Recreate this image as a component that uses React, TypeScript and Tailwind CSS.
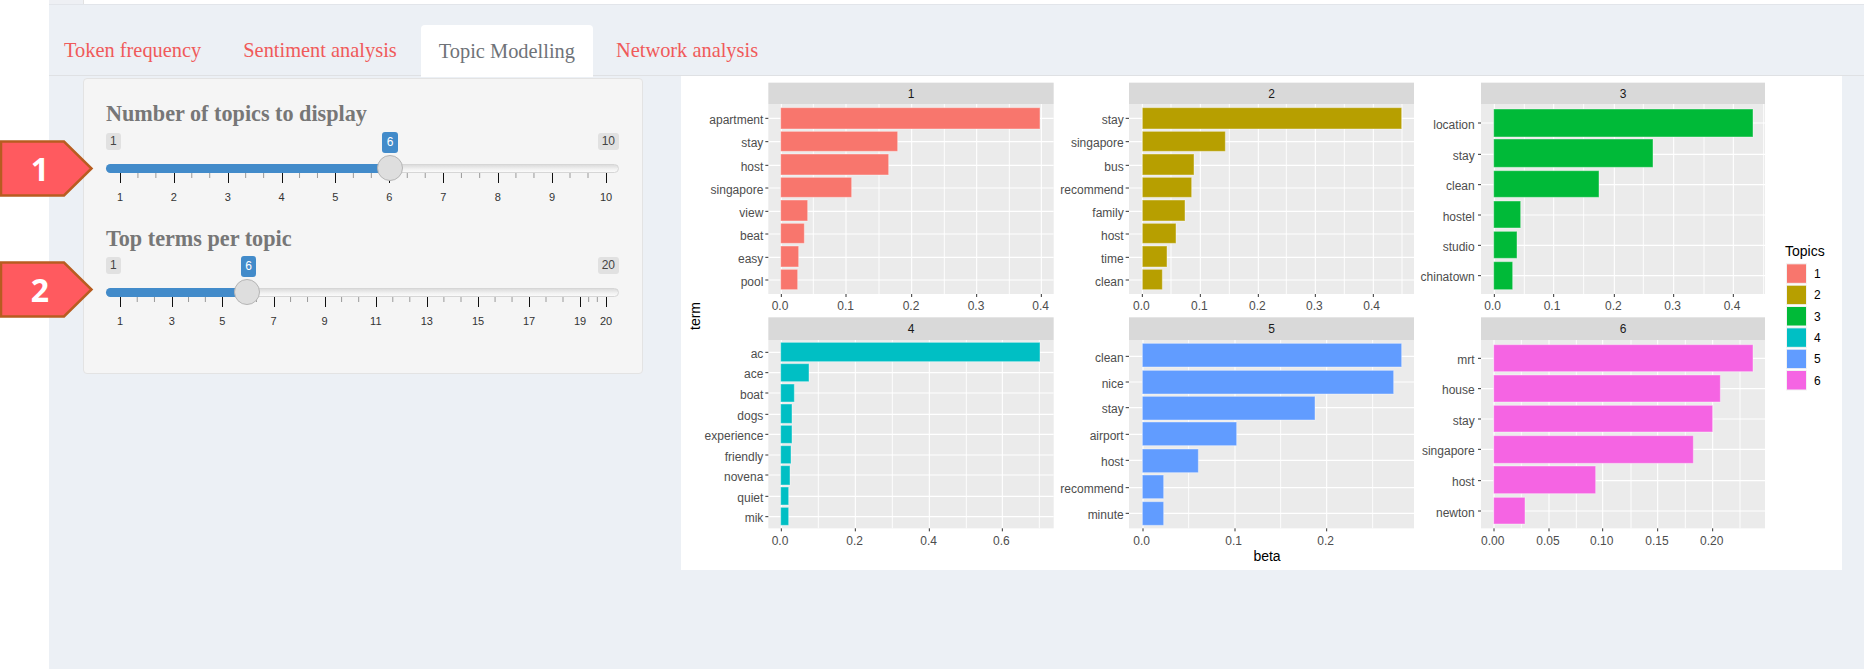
const SERIF = "font-['Liberation_Serif',serif]";

type Bar = [number, number, number, string];
type PanelSpec = {
  id: string; color: string; ox: number; oy: number; strip: [number, number]; stripY: [number, number];
  bottom: number; x0: number; termRight: number; tick: [number, number]; labelY: number;
  bars: Bar[]; grid: number[]; major: number[]; minor: number[]; xl: [string, number][];
};

const row1Y: [number, number][] = [[113,177],[184,244],[252,315],[322,382],[390,453],[460,520],[528,591],[598,659]];
const row1Grid = [145,215,286,354,424,492,562,630];

const mk = (ys: [number, number][], ends: number[], terms: string[]): Bar[] =>
  ys.map((y, i) => [y[0], y[1], ends[i], terms[i]]);

const panels: PanelSpec[] = [
  { id: "1", color: "#F8766D", ox: 680, oy: 70, strip: [265,1121], stripY: [38,102], bottom: 672, x0: 302, termRight: 250, tick: [256,265], labelY: 708,
    bars: mk(row1Y, [1080,653,626,515,383,373,356,353], ["apartment","stay","host","singapore","view","beat","easy","pool"]),
    grid: row1Grid, major: [304,498,695,890,1084], minor: [400,597,793,988],
    xl: [["0.0",300],["0.1",497],["0.2",693],["0.3",888],["0.4",1082]] },
  { id: "2", color: "#B79F00", ox: 1080, oy: 70, strip: [147,1002], stripY: [38,102], bottom: 672, x0: 187, termRight: 131, tick: [137,147], labelY: 708,
    bars: mk(row1Y, [965,436,342,335,315,288,261,247], ["stay","singapore","bus","recommend","family","host","time","clean"]),
    grid: row1Grid, major: [187,361,535,706,880], minor: [273,448,619,793,966],
    xl: [["0.0",184],["0.1",358],["0.2",532],["0.3",703],["0.4",875]] },
  { id: "3", color: "#00BA38", ox: 1460, oy: 70, strip: [63,915], stripY: [38,102], bottom: 672, x0: 101, termRight: 44, tick: [54,63], labelY: 708,
    bars: mk([[117,201],[207,292],[302,382],[393,474],[484,565],[575,659]], [879,579,417,182,171,158], ["location","stay","clean","hostel","studio","chinatown"]),
    grid: [159,253,344,435,526,617], major: [103,281,463,641,820], minor: [193,371,550,732,911],
    xl: [["0.0",98],["0.1",276],["0.2",460],["0.3",638],["0.4",816]] },
  { id: "4", color: "#00BFC4", ox: 680, oy: 310, strip: [265,1121], stripY: [22,90], bottom: 655, x0: 302, termRight: 250, tick: [256,265], labelY: 692,
    bars: mk([[97,155],[161,215],[222,276],[282,340],[346,400],[407,461],[467,525],[531,585],[592,646]], [1080,387,343,336,336,333,330,326,326], ["ac","ace","boat","dogs","experience","friendly","novena","quiet","mik"]),
    grid: [127,188,249,313,373,435,495,559,620], major: [304,526,748,967], minor: [415,637,859,1078],
    xl: [["0.0",300],["0.2",524],["0.4",746],["0.6",964]] },
  { id: "5", color: "#619CFF", ox: 1080, oy: 310, strip: [147,1002], stripY: [22,90], bottom: 655, x0: 187, termRight: 131, tick: [137,147], labelY: 692,
    bars: mk([[100,171],[181,252],[259,330],[336,407],[417,488],[495,566],[575,646]], [965,941,705,470,355,251,251], ["clean","nice","stay","airport","host","recommend","minute"]),
    grid: [139,216,293,373,451,533,610], major: [189,465,740], minor: [326,602,878],
    xl: [["0.0",185],["0.1",461],["0.2",737]] },
  { id: "6", color: "#F564E3", ox: 1460, oy: 310, strip: [63,915], stripY: [22,90], bottom: 655, x0: 101, termRight: 44, tick: [54,63], labelY: 692,
    bars: mk([[104,185],[195,276],[286,366],[377,460],[468,551],[562,642]], [879,781,758,700,407,195], ["mrt","house","stay","singapore","host","newton"]),
    grid: [145,236,327,418,512,603], major: [102,267,428,593,758], minor: [184,349,513,676,840],
    xl: [["0.00",98],["0.05",264],["0.10",425],["0.15",591],["0.20",755]] },
];

function Panel({ p }: { p: PanelSpec }) {
  const X = (v: number) => p.ox + v / 3;
  const Y = (v: number) => p.oy + v / 3;
  const L = X(p.strip[0]), R = X(p.strip[1]);
  const T = Y(p.stripY[0]), M = Y(p.stripY[1]), B = Y(p.bottom);
  return (
    <g>
      <rect x={L} y={T} width={R - L} height={M - T} fill="#D9D9D9" />
      <text x={(L + R) / 2} y={(T + M) / 2 + 4.4} textAnchor="middle" className="text-[12px] fill-[#1a1a1a]">{p.id}</text>
      <rect x={L} y={M} width={R - L} height={B - M} fill="#EBEBEB" />
      {p.minor.map((v) => <line key={"n" + v} x1={X(v)} x2={X(v)} y1={M} y2={B} stroke="#fff" strokeWidth={0.9} />)}
      {p.major.map((v) => <line key={"m" + v} x1={X(v)} x2={X(v)} y1={M} y2={B} stroke="#fff" strokeWidth={1.1} />)}
      {p.grid.map((v) => <line key={"h" + v} x1={L} x2={R} y1={Y(v)} y2={Y(v)} stroke="#fff" strokeWidth={1.1} />)}
      {p.bars.map((b) => (
        <rect key={b[3]} x={X(p.x0)} y={Y(b[0])} width={(b[2] - p.x0) / 3} height={(b[1] - b[0]) / 3} fill={p.color} stroke="#fff" strokeOpacity={0.4} strokeWidth={1} />
      ))}
      {p.bars.map((b, i) => (
        <g key={"t" + b[3]}>
          <line x1={X(p.tick[0])} x2={X(p.tick[1])} y1={Y(p.grid[i])} y2={Y(p.grid[i])} stroke="#333" strokeWidth={1} />
          <text x={X(p.termRight)} y={Y(p.grid[i]) + 5.6} textAnchor="end" className="text-[12px] fill-[#4d4d4d]">{b[3]}</text>
        </g>
      ))}
      {p.major.map((v) => <line key={"k" + v} x1={X(v)} x2={X(v)} y1={B} y2={B + 3} stroke="#333" strokeWidth={1} />)}
      {p.xl.map(([t, v]) => (
        <text key={t} x={X(v)} y={Y(p.labelY) + 4.4} textAnchor="middle" className="text-[12px] fill-[#4d4d4d]">{t}</text>
      ))}
    </g>
  );
}

const legendY = [580,644,708,772,836,900];

function Chart() {
  return (
    <svg viewBox="681 76 1161 494" width={1161} height={494} className="block font-['Liberation_Sans',sans-serif]">
      {panels.map((p) => <Panel key={p.id} p={p} />)}
      <text x={695} y={316} textAnchor="middle" transform="rotate(-90 695 316) translate(0 4.5)" className="text-[14px] fill-black">term</text>
      <text x={1267} y={561} textAnchor="middle" className="text-[14px] fill-black">beta</text>
      <text x={1785} y={255.5} className="text-[14px] fill-black">Topics</text>
      {panels.map((p, i) => (
        <g key={p.id}>
          <rect x={1786.5} y={70 + legendY[i] / 3 + 0.5} width={20} height={19.5} fill={p.color} stroke="#f2f2f2" strokeWidth={1} />
          <text x={1814} y={70 + legendY[i] / 3 + 14.5} className="text-[12px] fill-black">{p.id}</text>
        </g>
      ))}
    </svg>
  );
}

type SliderSpec = {
  max: string; valueX: number; valueW: number; fillTo: number;
  majors: [string, number][]; minors: number[];
};

function between(xs: number[]) {
  const out: number[] = [];
  for (let i = 0; i + 1 < xs.length; i++) {
    const a = xs[i], b = xs[i + 1];
    out.push(a + (b - a) / 3, a + (2 * (b - a)) / 3);
  }
  return out;
}

const m1: [string, number][] = [["1",120],["2",173.8],["3",227.7],["4",281.6],["5",335.4],["6",389.3],["7",443.2],["8",497.9],["9",552],["10",606]];
const m2: [string, number][] = [["1",120],["3",171.7],["5",222.2],["7",273.6],["9",324.5],["11",375.8],["13",426.8],["15",478.1],["17",529],["19",580],["20",606]];

const sliders: SliderSpec[] = [
  { max: "10", valueX: 382, valueW: 16, fillTo: 390, majors: m1, minors: between(m1.map((m) => m[1])) },
  { max: "20", valueX: 241, valueW: 15, fillTo: 247, majors: m2, minors: between(m2.map((m) => m[1])) },
];

function Slider({ s }: { s: SliderSpec }) {
  const OX = 106;
  return (
    <div className="relative w-[513px] font-['Liberation_Sans',sans-serif]">
      <div className="flex h-[31px] items-start justify-between text-[12px] leading-[17px] text-[#444]">
        <span className="rounded-[3px] bg-[#e1e1e1] px-[4px]">1</span>
        <span className="rounded-[3px] bg-[#e1e1e1] px-[4px]">{s.max}</span>
      </div>
      <span
        className="absolute top-[-1px] rounded-[3px] bg-[#428bca] text-center text-[12px] leading-[21px] text-white"
        style={{ left: s.valueX - OX, width: s.valueW }}
      >
        6
      </span>
      <div className="h-[9px] rounded-[5px] border border-[#d6d6d6] bg-[linear-gradient(#dcdcdc,#f2f2f2_60%,#fafafa)]">
        <div className="-m-px h-[9px] rounded-l-[5px] bg-[#428bca]" style={{ width: s.fillTo - OX }} />
      </div>
      <span
        className="absolute top-[22px] h-[26px] w-[26px] rounded-full border border-[#b5b5b5] bg-[#dedede]"
        style={{ left: s.fillTo - OX - 13 }}
      />
      <svg width={513} height={32} className="block text-[11px]">
        {s.minors.map((x) => <line key={x} x1={x - OX} x2={x - OX} y1={0} y2={5} stroke="#999" strokeWidth={1} />)}
        {s.majors.map(([t, x]) => (
          <g key={t}>
            <line x1={Math.round(x - OX) + 0.5} x2={Math.round(x - OX) + 0.5} y1={0} y2={10} stroke="#111" strokeWidth={1} />
            <text x={x - OX} y={27.5} textAnchor="middle" className="fill-[#333]">{t}</text>
          </g>
        ))}
      </svg>
    </div>
  );
}

function Marker({ n, top }: { n: string; top: string }) {
  return (
    <div className={`absolute left-0 h-[57px] w-[94px] ${top}`}>
      <svg width={94} height={57} className="absolute inset-0">
        <path d="M1 1.5 H64 L91.5 28.5 L64 55.5 H1 Z" fill="#ff5a5f" stroke="#b85c20" strokeWidth={2.5} />
      </svg>
      <span className="absolute left-[1px] top-0 w-[78px] text-center font-['Open_Sans',sans-serif] text-[32px] font-bold leading-[57px] text-white">{n}</span>
    </div>
  );
}

const tabs = ["Token frequency", "Sentiment analysis", "Topic Modelling", "Network analysis"];

export default function App() {
  return (
    <div className="relative flex h-[669px] w-[1864px] overflow-hidden bg-white">
      <div className="w-[49px] shrink-0 bg-white" />
      <main className="flex min-w-0 flex-1 flex-col bg-[#ecf0f5]">
        <div className="flex h-[5px] border-b border-[#e2e5ea]">
          <div className="w-[34px] bg-[#eef0f4]" />
          <div className="flex-1 border-l border-[#e2e2e2] bg-white" />
        </div>
        <nav className={`mt-[20px] flex h-[51px] gap-[6px] border-b border-[#dfe1e4] text-[20.4px] ${SERIF}`}>
          {tabs.map((t, i) => (
            <div
              key={t}
              className={
                i === 2
                  ? "-mb-px flex h-[52px] items-center rounded-t-[4px] bg-white px-[18px] text-[#6f7378]"
                  : i === 0
                    ? "flex items-center pl-[15px] pr-[18px] text-[#f05a5a]"
                    : i === 3
                      ? "flex items-center px-[17px] text-[#f05a5a]"
                      : "flex items-center px-[18px] text-[#f05a5a]"
              }
            >
              {t}
            </div>
          ))}
        </nav>
        <div className="flex items-start pl-[34px]">
          <aside className="mt-[2px] h-[296px] w-[560px] shrink-0 rounded-[4px] border border-[#e3e3e3] bg-[#f5f5f5] pl-[22px] pt-[22px]">
            <h2 className={`h-[26px] text-[22.2px] font-bold leading-[26px] text-[#777] ${SERIF}`}>Number of topics to display</h2>
            <div className="mt-[6px]"><Slider s={sliders[0]} /></div>
            <h2 className={`mt-[21px] h-[26px] text-[22.2px] font-bold leading-[26px] text-[#777] ${SERIF}`}>Top terms per topic</h2>
            <div className="mt-[5px]"><Slider s={sliders[1]} /></div>
          </aside>
          <section className="ml-[38px] h-[494px] w-[1161px] shrink-0 bg-white">
            <Chart />
          </section>
        </div>
      </main>
      <Marker n="1" top="top-[140px]" />
      <Marker n="2" top="top-[261px]" />
    </div>
  );
}
